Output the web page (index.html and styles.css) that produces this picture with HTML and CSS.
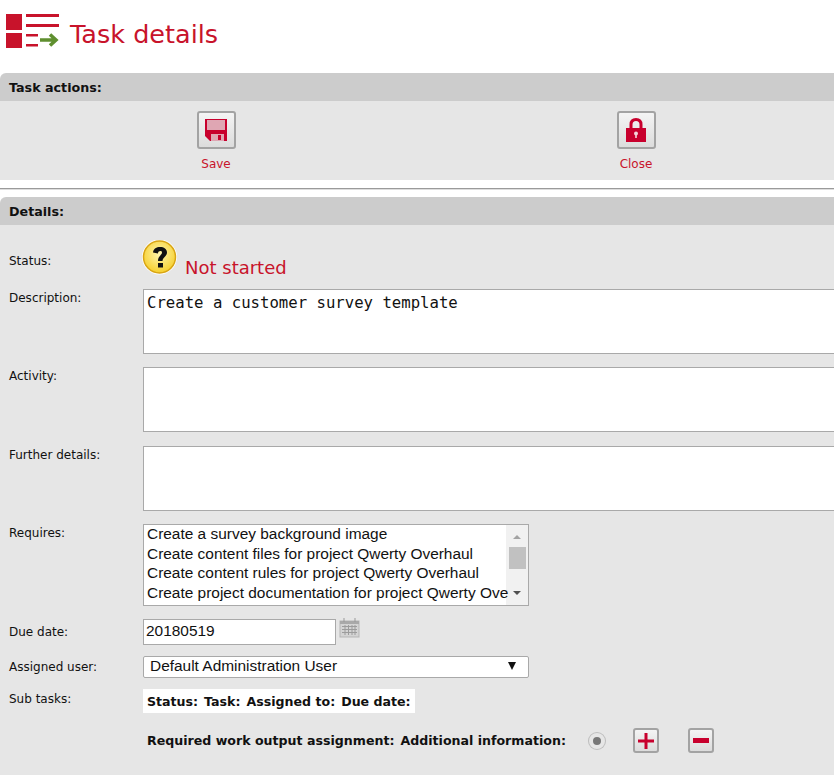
FILE: index.html
```html
<!DOCTYPE html>
<html>

<head>
  <title>Task details</title>
  <link rel="stylesheet" href="styles.css">
</head>

<body>

  <div class="page-title">
    <svg class="title-icon" width="56" height="36" viewBox="0 0 56 36">
      <rect x="1" y="0" width="16" height="16" fill="#c8132b" />
      <rect x="1" y="19" width="16" height="15" fill="#c8132b" />
      <rect x="21" y="0" width="33" height="3" fill="#c8132b" />
      <rect x="21" y="10" width="33" height="3" fill="#c8132b" />
      <rect x="21" y="20" width="12" height="2.5" fill="#c8132b" />
      <rect x="21" y="30" width="12" height="2.5" fill="#c8132b" />
      <path d="M35 26H50M45 20.5L51 26L45 31.5" fill="none" stroke="#5f8f2f" stroke-width="3.5" />
    </svg>
    <h1 class="title-text">Task details</h1>
  </div>

  <div class="section-header">Task actions:</div>
  <div class="actions">
    <div class="action">
      <button class="icon-button big">
        <svg width="24" height="24" viewBox="0 0 24 24">
          <path d="M1 1H23V23H6L1 18Z" fill="#c8002d" />
          <rect x="3" y="2" width="18" height="10" fill="#dfa6b3" />
          <rect x="7" y="16" width="13" height="7" fill="#dfa6b3" />
          <rect x="14" y="17" width="3" height="5" fill="#c8002d" />
        </svg>
      </button>
      <span class="action-label">Save</span>
    </div>
    <div class="action">
      <button class="icon-button big">
        <svg width="24" height="26" viewBox="0 0 24 26">
          <path d="M7 12V7.500C7 4 9 2.500 12 2.500C15 2.500 17 4 17 7.500V12" fill="none" stroke="#c8002d" stroke-width="3" />
          <rect x="2" y="11" width="20" height="14" fill="#c8002d" />
          <circle cx="12" cy="16.500" r="2" fill="#f3d5da" />
          <rect x="11.200" y="17" width="1.600" height="4" fill="#f3d5da" />
        </svg>
      </button>
      <span class="action-label">Close</span>
    </div>
  </div>

  <hr class="divider">

  <div class="section-header">Details:</div>
  <div class="details">

    <div class="row status-row">
      <label class="field-label status-label">Status:</label>
      <div class="status-value">
        <svg width="36" height="36" viewBox="0 0 36 36">
          <defs>
            <radialGradient id="statusFill" cx="50%" cy="40%" r="60%">
              <stop offset="0%" stop-color="#fff6b0" />
              <stop offset="100%" stop-color="#f6cf2c" />
            </radialGradient>
          </defs>
          <circle cx="17.500" cy="17" r="17.500" fill="#fff" />
          <circle cx="17.500" cy="17" r="16" fill="url(#statusFill)" stroke="#d9a514" stroke-width="1.500" />
          <path d="M11 12.500C11.500 8.500 14.500 7 18 7C22 7 25 9 25 12.500C25 16 21 17 20.500 21H16C16 16 20 15 20 12.500C20 10.500 16 10.500 16 13.500Z" fill="#111" />
          <rect x="16" y="23" width="5" height="4.500" fill="#111" />
        </svg>
        <span class="status-text">Not started</span>
      </div>
    </div>

    <div class="row gap-13">
      <label class="field-label text-label">Description:</label>
      <textarea class="text-area">Create a customer survey template</textarea>
    </div>

    <div class="row gap-13">
      <label class="field-label text-label">Activity:</label>
      <textarea class="text-area"></textarea>
    </div>

    <div class="row gap-14">
      <label class="field-label text-label">Further details:</label>
      <textarea class="text-area"></textarea>
    </div>

    <div class="row gap-13">
      <label class="field-label text-label">Requires:</label>
      <div class="list-box">
        <div class="list-items">
          <div class="list-item">Create a survey background image</div>
          <div class="list-item">Create content files for project Qwerty Overhaul</div>
          <div class="list-item">Create content rules for project Qwerty Overhaul</div>
          <div class="list-item">Create project documentation for project Qwerty Ove</div>
        </div>
        <div class="scroll-bar">
          <span class="scroll-up"></span>
          <span class="scroll-thumb"></span>
          <span class="scroll-down"></span>
        </div>
      </div>
    </div>

    <div class="row gap-13">
      <label class="field-label date-label">Due date:</label>
      <input class="date-input" type="text" value="20180519">
      <svg class="calendar" width="21" height="21" viewBox="0 0 21 21">
        <rect x="1" y="4" width="19" height="16" fill="#d4d4d4" stroke="#b5b5b5" />
        <rect x="1" y="4" width="19" height="3" fill="#a9a9a9" />
        <path d="M5 1V5M16 1V5" stroke="#999" stroke-width="1" />
        <path d="M3 9.500H18M3 12.500H18M3 15.500H18M6 8V18M9.500 8V18M13 8V18M16 8V18" stroke="#9c9c9c" stroke-width="1" />
      </svg>
    </div>

    <div class="row gap-11">
      <label class="field-label user-label">Assigned user:</label>
      <div class="user-select">
        <span>Default Administration User</span>
        <span class="select-arrow"></span>
      </div>
    </div>

    <div class="row gap-11">
      <label class="field-label sub-label">Sub tasks:</label>
      <div class="sub-table">
        <b>Status:</b><b>Task:</b><b>Assigned to:</b><b>Due date:</b>
      </div>
    </div>

    <div class="row output-row">
      <div class="output-heads">
        <b>Required work output assignment:</b><b>Additional information:</b>
      </div>
      <span class="radio"></span>
      <button class="icon-button small plus">
        <svg width="16" height="16" viewBox="0 0 16 16">
          <path d="M0 6.500H16V9.500H0ZM6.500 0H9.500V16H6.500Z" fill="#c8002d" />
        </svg>
      </button>
      <button class="icon-button small minus">
        <svg width="16" height="16" viewBox="0 0 16 16">
          <rect x="0" y="5" width="16" height="5" fill="#c8002d" />
        </svg>
      </button>
    </div>

  </div>

</body>

</html>
```

FILE: styles.css
```css
* {
  box-sizing: border-box;
}

html,
body {
  margin: 0;
  height: 775px;
  overflow: hidden;
}

body {
  background-color: #ffffff;
  color: #111111;
  font-family: "DejaVu Sans", sans-serif;
  font-size: 12px;
}

/* Page title */
.page-title {
  display: flex;
  align-items: flex-start;
  height: 73px;
  padding: 14px 0 0 5px;
}

.title-icon {
  flex-shrink: 0;
}

.title-text {
  margin: 5px 0 0 9px;
  color: #c8132b;
  font-size: 25.500px;
  font-weight: normal;
  line-height: 30px;
}

/* Section headers */
.section-header {
  height: 28px;
  padding-left: 9px;
  border-top-left-radius: 6px;
  background-color: #cccccc;
  font-size: 12.700px;
  font-weight: bold;
  line-height: 29px;
}

/* Task actions */
.actions {
  display: flex;
  height: 79px;
  padding: 10px 0 0 6px;
  background-color: #e6e6e6;
}

.action {
  flex-shrink: 0;
  display: flex;
  flex-direction: column;
  align-items: center;
  width: 420px;
}

.action-label {
  margin-top: 8px;
  color: #c8132b;
  line-height: 15px;
}

.icon-button {
  display: flex;
  justify-content: center;
  align-items: center;
  padding: 0;
  border: 2px solid #a3a3a3;
  border-radius: 3px;
  background: linear-gradient(#f4f4f4, #dcdcdc);
}

.big {
  width: 39px;
  height: 38px;
}

.small {
  width: 26px;
  height: 25px;
}

.divider {
  height: 2px;
  margin: 8px 0 7px;
  border: none;
  border-top: 1px solid #9a9a9a;
  border-bottom: 1px solid #dddddd;
}

/* Details form */
.details {
  height: 550px;
  padding-top: 15px;
  background-color: #e6e6e6;
}

.row {
  display: flex;
  align-items: flex-start;
}

.gap-11 {
  margin-top: 11px;
}

.gap-13 {
  margin-top: 13px;
}

.gap-14 {
  margin-top: 14px;
}

.field-label {
  flex-shrink: 0;
  width: 143px;
  padding-left: 9px;
  line-height: 15px;
}

.status-label {
  padding-top: 14px;
}

.text-label {
  padding-top: 2px;
}

.date-label {
  padding-top: 6px;
}

.user-label {
  padding-top: 4px;
}

.sub-label {
  padding-top: 3px;
}

.status-value {
  display: flex;
  align-items: flex-end;
  height: 36px;
  margin-left: -1px;
}

.status-text {
  margin-left: 7px;
  margin-bottom: -2px;
  color: #c8132b;
  font-size: 18px;
  line-height: 20px;
}

.text-area {
  flex-shrink: 0;
  display: block;
  width: 720px;
  height: 65px;
  padding: 3px 3px;
  border: 1px solid #a9a9a9;
  border-radius: 0;
  background-color: #ffffff;
  color: #111111;
  font-family: "DejaVu Sans Mono", monospace;
  font-size: 15.650px;
  line-height: 19px;
  resize: none;
}

/* Requires list */
.list-box {
  display: flex;
  width: 386px;
  height: 82px;
  border: 1px solid #a9a9a9;
  background-color: #ffffff;
}

.list-items {
  flex: 1;
  min-width: 0;
  padding-left: 3px;
  font-family: "Liberation Sans", sans-serif;
  font-size: 15.450px;
  line-height: 19.700px;
}

.list-item {
  position: relative;
  top: -1px;
  white-space: nowrap;
}

.scroll-bar {
  flex-shrink: 0;
  display: flex;
  flex-direction: column;
  align-items: center;
  width: 22px;
  background-color: #f1f1f1;
}

.scroll-up {
  margin-top: 10px;
  border-left: 4px solid transparent;
  border-right: 4px solid transparent;
  border-bottom: 4px solid #a3a3a3;
}

.scroll-thumb {
  width: 17px;
  height: 22px;
  margin-top: 8px;
  background-color: #c1c1c1;
}

.scroll-down {
  margin-top: 22px;
  border-left: 4px solid transparent;
  border-right: 4px solid transparent;
  border-top: 4px solid #505050;
}

/* Due date */
.date-input {
  width: 193px;
  height: 26px;
  padding: 0 2px 2px;
  border: 1px solid #a9a9a9;
  border-radius: 0;
  background-color: #ffffff;
  color: #111111;
  font-family: "Liberation Sans", sans-serif;
  font-size: 15.450px;
}

.calendar {
  margin: -2px 0 0 3px;
}

/* Assigned user */
.user-select {
  display: flex;
  justify-content: space-between;
  align-items: center;
  width: 386px;
  height: 22px;
  padding: 0 12px 2px 6px;
  border: 1px solid #a9a9a9;
  border-radius: 2px;
  background-color: #ffffff;
  font-family: "Liberation Sans", sans-serif;
  font-size: 15.450px;
}

.select-arrow {
  border-left: 4px solid transparent;
  border-right: 4px solid transparent;
  border-top: 8px solid #111111;
}

/* Sub tasks */
.sub-table {
  display: flex;
  gap: 6px;
  height: 24px;
  padding: 0 4px;
  background-color: #ffffff;
  font-size: 12.600px;
  line-height: 26px;
}

.output-row {
  align-items: center;
  margin-top: 15px;
  padding-left: 147px;
}

.output-heads {
  display: flex;
  gap: 6px;
  width: 442px;
  font-size: 12.600px;
}

.radio {
  width: 16px;
  height: 16px;
  border: 4px solid #e6e6e6;
  border-radius: 50%;
  background-color: #777777;
  box-shadow: 0 0 0 1px #bdbdbd;
}

.plus {
  margin-left: 28px;
}

.minus {
  margin-left: 29px;
}
```
